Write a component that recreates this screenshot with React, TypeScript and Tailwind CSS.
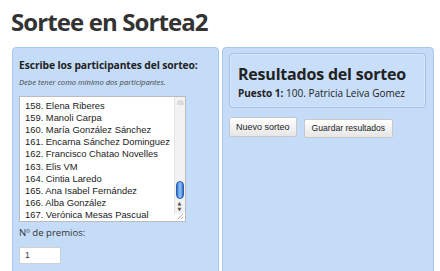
import React from "react";

const names = [
  "157. Juan Pérez",
  "158. Elena Riberes",
  "159. Manoli Carpa",
  "160. María González Sánchez",
  "161. Encarna Sánchez Dominguez",
  "162. Francisco Chatao Novelles",
  "163. Elis VM",
  "164. Cintia Laredo",
  "165. Ana Isabel Fernández",
  "166. Alba González",
  "167. Verónica Mesas Pascual",
];

const ui = { fontFamily: '"Open Sans", "DejaVu Sans", sans-serif' };
const mono = { fontFamily: '"Liberation Sans", Arial, sans-serif' };

export default function App() {
  return (
    <div className="w-[440px] h-[271px] bg-white overflow-hidden text-[#333]" style={ui}>
      <h1 className="pl-[11px] pt-[5px] h-[47px] text-[24px] leading-[34px] font-bold tracking-[-0.9px] text-[#333]">
        Sortee en Sortea2
      </h1>
      <div className="flex gap-[3px] pl-[12px] h-[224px]">
        <div className="w-[207px] h-[240px] bg-[#c5dcf9] border border-[#a8c7ee] rounded-[4px] pl-[6px] pt-[9px]">
          <div className="text-[10.3px] font-bold leading-[16px] tracking-[-0.1px] text-[#222]">
            Escribe los participantes del sorteo:
          </div>
          <div className="text-[7.6px] italic leading-[10px] mt-[4px] text-[#444]">
            Debe tener como mínimo dos participantes.
          </div>
          <div className="relative mt-[9px] w-[167px] h-[126px] bg-white border border-[#bbb] overflow-hidden">
            <div className="absolute left-[5px] top-[-9px] text-[9.4px] leading-[12.1px] text-[#222]" style={mono}>
              {names.map((n) => (
                <div key={n}>{n}</div>
              ))}
            </div>
            <div className="absolute right-0 top-0 w-[11px] h-[117px] bg-[#f2f2f2] border-l border-[#e4e4e4]">
              <div className="mx-auto mt-[3px] w-[7px] h-[5px] rounded-t-full bg-[#dcdcdc]" />
              <div className="absolute left-[1px] top-[84px] w-[8px] h-[18px] rounded-full bg-gradient-to-r from-[#2c6fd4] via-[#9cc8f7] to-[#2c6fd4] border border-[#2a5fb0]" />
              <div className="absolute left-[2.5px] top-[104px] text-[5px] leading-[5px] text-[#555]">▲</div>
              <div className="absolute left-[2.5px] top-[110px] text-[5px] leading-[5px] text-[#555]">▼</div>
            </div>
            <svg className="absolute right-[1px] bottom-[1px]" width="7" height="7" viewBox="0 0 7 7">
              <path d="M6 1 L1 6 M6 4 L4 6" stroke="#999" strokeWidth="0.8" />
            </svg>
          </div>
          <div className="mt-[4px] text-[9.6px] leading-[14px] text-[#333]">Nº de premios:</div>
          <div className="mt-[7px] w-[42px] h-[17px] bg-white border border-[#d0d0d0] text-[8.5px] leading-[15px] pl-[5px]" style={mono}>
            1
          </div>
        </div>
        <div className="w-[212px] h-[240px] bg-[#c5dcf9] border border-[#a8c7ee] rounded-[4px] pl-[6px] pt-[5px]">
          <div className="w-[197px] h-[55px] border border-[#a3c2ea] rounded-[4px] bg-[#c8def9] shadow-[inset_0_0_0_1px_#d8e8fc] pl-[8px] pt-[10px]">
            <div className="text-[16px] font-bold leading-[20px] tracking-[-0.2px] text-[#222]">Resultados del sorteo</div>
            <div className="text-[10px] leading-[14px] mt-[2px] text-[#222]">
              <span className="font-bold">Puesto 1:</span> 100. Patricia Leiva Gomez
            </div>
          </div>
          <div className="flex gap-[7px] mt-[9px] items-start">
            <div className="h-[20px] px-[6px] border border-[#c8c8c8] rounded-[2px] bg-gradient-to-b from-white to-[#e6e6e6] text-[9px] leading-[18px] text-[#222]" style={mono}>
              Nuevo sorteo
            </div>
            <div className="mt-[2px] h-[19px] px-[7px] border border-[#c8c8c8] rounded-[2px] bg-gradient-to-b from-white to-[#e6e6e6] text-[8.6px] leading-[17px] text-[#222]" style={mono}>
              Guardar resultados
            </div>
          </div>
        </div>
      </div>
    </div>
  );
}
